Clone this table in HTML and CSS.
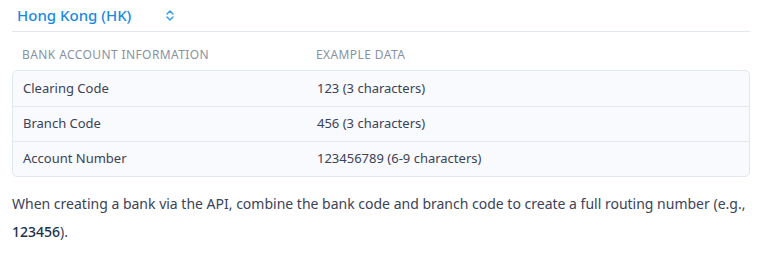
FILE: index.html
```html
<!DOCTYPE html>
<html>
<head>
<meta charset="utf-8">
<link rel="stylesheet" href="styles.css">
</head>
<body>
<div class="page">
  <div class="select-row">
    <button class="select">
      <span class="select-label">Hong Kong (HK)</span>
      <svg class="chevrons" width="8" height="11" viewBox="0 0 8 11"><path d="M1 4 L4 1 L7 4 M1 7 L4 10 L7 7" fill="none" stroke="#3b9ee8" stroke-width="1.5" stroke-linecap="round" stroke-linejoin="round"/></svg>
    </button>
  </div>
  <div class="table-head">
    <div class="col-a">BANK ACCOUNT INFORMATION</div>
    <div class="col-b">EXAMPLE DATA</div>
  </div>
  <div class="table-body">
    <div class="row"><div class="col-a">Clearing Code</div><div class="col-b">123 (3 characters)</div></div>
    <div class="row"><div class="col-a">Branch Code</div><div class="col-b">456 (3 characters)</div></div>
    <div class="row"><div class="col-a">Account Number</div><div class="col-b">123456789 (6-9 characters)</div></div>
  </div>
  <p class="note">When creating a bank via the API, combine the bank code and branch code to create a full routing number (e.g., <strong>123456</strong>).</p>
</div>
</body>
</html>
```
FILE: styles.css
```css
* { box-sizing: border-box; }
html, body { margin: 0; padding: 0; background: #fff; }
body { font-family: "Noto Sans", sans-serif; color: #3c4257; }
.page { padding: 0 33px 0 12px; }
.select-row { border-bottom: 1px solid #e3e8ee; height: 32px; display: flex; align-items: center; }
.select { display: flex; align-items: center; background: none; border: 0; padding: 0 0 0 5px; margin: 0; font: inherit; cursor: pointer; width: 162px; justify-content: space-between; }
.select-label { color: #1a8ae0; font-size: 15px; font-weight: 500; line-height: 20px; margin-top: -2px; }
.chevrons { display: block; }
.table-head { display: flex; height: 38px; align-items: center; padding: 6px 10px 0; font-size: 12px; letter-spacing: 0.4px; color: #8792a2; }
.col-a { width: 294px; }
.col-b { flex: 1; }
.table-body { border: 1px solid #e3e8ee; border-radius: 5px; background: #f8fafd; }
.row { display: flex; height: 35px; align-items: center; padding: 0 10px 2px; font-size: 13px; color: #3c4257; }
.row + .row { border-top: 1px solid #e3e8ee; }
.note { margin: 13px 0 0; font-size: 14px; line-height: 28px; color: #3c4257; }
.note strong { font-weight: 500; color: #1a2f4a; }
```
